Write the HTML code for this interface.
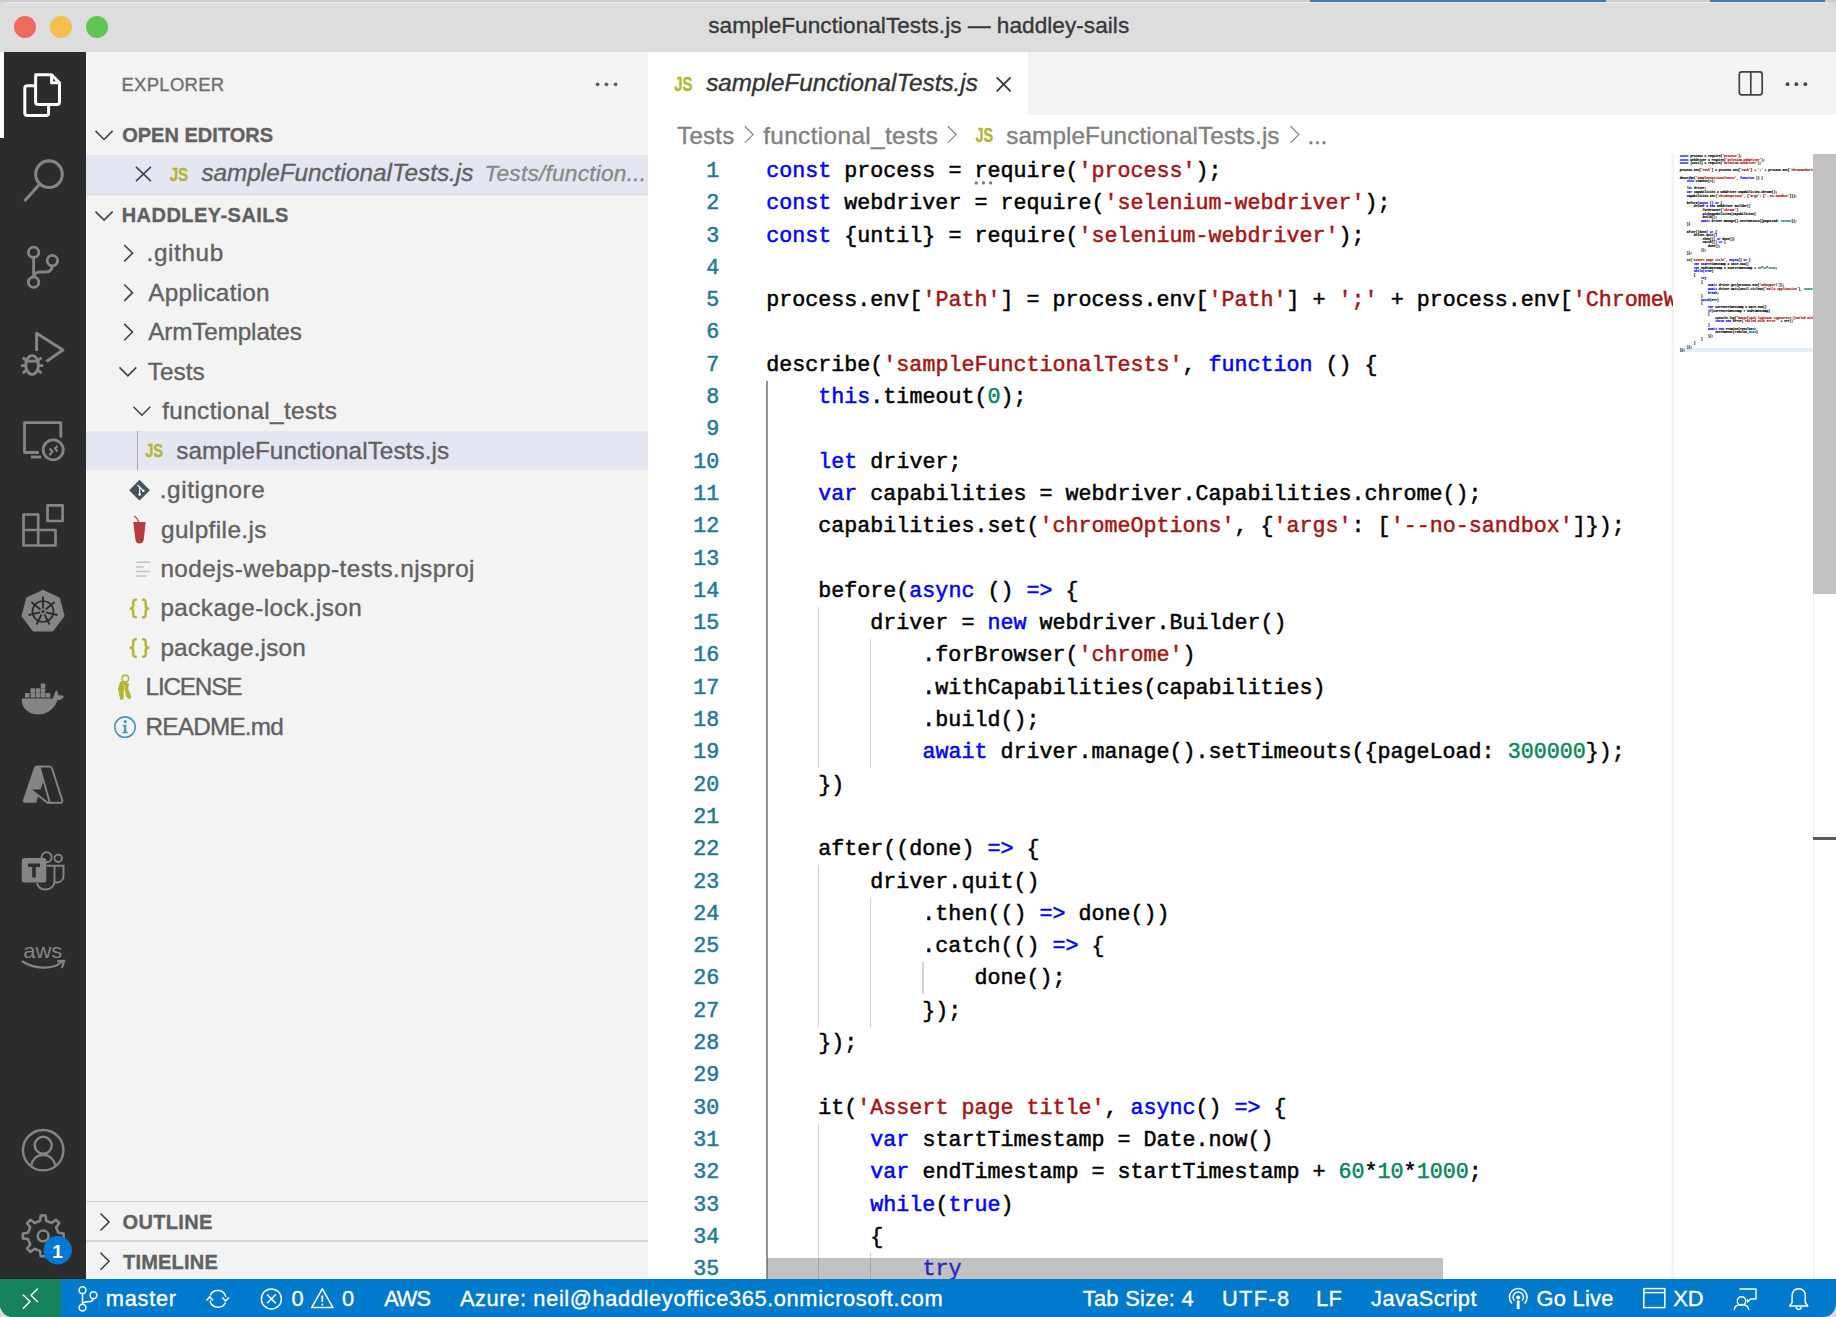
<!DOCTYPE html><html><head><meta charset="utf-8"><style>
*{margin:0;padding:0;box-sizing:border-box}
html,body{width:1836px;height:1317px;overflow:hidden;background:#d9d9d9;font-family:"Liberation Sans",sans-serif;position:relative}
.a{position:absolute}
.t{position:absolute;white-space:pre;line-height:1;-webkit-text-stroke:0.35px currentColor}
.cl{position:absolute;left:767px;-webkit-text-stroke:0.5px currentColor;font-family:"Liberation Mono",monospace;font-size:21.68px;white-space:pre;color:#000;line-height:32.3px;height:32.3px}
.ln{position:absolute;-webkit-text-stroke:0.5px currentColor;left:660px;width:59.3px;text-align:right;font-family:"Liberation Mono",monospace;font-size:21.68px;white-space:pre;color:#237893;line-height:32.3px}
.k{color:#0000ff}.s{color:#a31515}.n{color:#098658}
.g{position:absolute;width:1px;background:#d3d3d3}
svg{position:absolute;overflow:visible}
</style></head><body>
<div class="a" style="left:0;top:0;width:1836px;height:1317px;background:#d9d9d9"></div>
<div class="a" style="left:0;top:0;width:1836px;height:2px;background:#cfcccc"></div>
<div class="a" style="left:1310px;top:0;width:296px;height:2px;background:#3d78b0"></div>
<div class="a" style="left:1710px;top:0;width:115px;height:2px;background:#3d78b0"></div>
<div class="a" style="left:0;top:2px;width:1836px;height:50px;background:#dddddd;border-top-left-radius:12px;border-top-right-radius:12px;border-top:1px solid #ededed"></div>
<div class="a" style="left:14px;top:16px;width:22px;height:22px;border-radius:50%;background:#ec6a5e"></div>
<div class="a" style="left:50px;top:16px;width:22px;height:22px;border-radius:50%;background:#f4bf4f"></div>
<div class="a" style="left:86px;top:16px;width:22px;height:22px;border-radius:50%;background:#61c554"></div>
<div class="t" style="left:708.20px;top:14.87px;font-size:22.6px;color:#383838;font-weight:normal;font-style:normal;letter-spacing:0.041px;">sampleFunctionalTests.js — haddley-sails</div>
<div class="a" style="left:0;top:52px;width:86px;height:1227px;background:#2c2c2c"></div>
<div class="a" style="left:0;top:52px;width:3.6px;height:86px;background:#ffffff"></div>
<div class="a" style="left:86px;top:52px;width:562px;height:1227px;background:#f3f3f3"></div>
<div class="t" style="left:121.50px;top:75.84px;font-size:18.5px;color:#6f6f6f;font-weight:normal;font-style:normal;letter-spacing:0.271px;">EXPLORER</div>
<div class="t" style="left:122.20px;top:124.57px;font-size:20px;color:#616161;font-weight:bold;font-style:normal;letter-spacing:0.018px;">OPEN EDITORS</div>
<div class="a" style="left:86px;top:154.5px;width:562px;height:39.5px;background:#e4e6f1"></div>
<div class="a" style="left:86px;top:194px;width:562px;height:1px;background:#d9d9d9"></div>
<div class="t" style="left:201.40px;top:160.93px;font-size:24.3px;color:#616161;font-weight:normal;font-style:italic;letter-spacing:0.004px;">sampleFunctionalTests.js</div>
<div class="t" style="left:484.50px;top:162.28px;font-size:22.7px;color:#8a8a8a;font-weight:normal;font-style:italic;letter-spacing:0.213px;">Tests/function...</div>
<div class="t" style="left:121.70px;top:205.37px;font-size:20px;color:#616161;font-weight:bold;font-style:normal;letter-spacing:0.458px;">HADDLEY-SAILS</div>
<div class="t" style="left:146.60px;top:241.38px;font-size:24.3px;color:#616161;font-weight:normal;font-style:normal;letter-spacing:0.600px;">.github</div>
<div class="t" style="left:148.20px;top:280.83px;font-size:24.3px;color:#616161;font-weight:normal;font-style:normal;letter-spacing:0.250px;">Application</div>
<div class="t" style="left:148.20px;top:320.28px;font-size:24.3px;color:#616161;font-weight:normal;font-style:normal;letter-spacing:-0.145px;">ArmTemplates</div>
<div class="t" style="left:147.80px;top:359.73px;font-size:24.3px;color:#616161;font-weight:normal;font-style:normal;letter-spacing:0.050px;">Tests</div>
<div class="t" style="left:162.20px;top:399.18px;font-size:24.3px;color:#616161;font-weight:normal;font-style:normal;letter-spacing:0.387px;">functional_tests</div>
<div class="a" style="left:86px;top:430.75px;width:562px;height:39.45px;background:#e4e6f1"></div>
<div class="a" style="left:137px;top:430.75px;width:1.4px;height:39.45px;background:#a9a9a9"></div>
<div class="t" style="left:176.30px;top:438.63px;font-size:24.3px;color:#616161;font-weight:normal;font-style:normal;letter-spacing:0.057px;">sampleFunctionalTests.js</div>
<div class="t" style="left:159.80px;top:478.08px;font-size:24.3px;color:#616161;font-weight:normal;font-style:normal;letter-spacing:0.556px;">.gitignore</div>
<div class="t" style="left:161.00px;top:517.53px;font-size:24.3px;color:#616161;font-weight:normal;font-style:normal;letter-spacing:0.420px;">gulpfile.js</div>
<div class="t" style="left:160.40px;top:556.98px;font-size:24.3px;color:#616161;font-weight:normal;font-style:normal;letter-spacing:0.446px;">nodejs-webapp-tests.njsproj</div>
<div class="t" style="left:160.40px;top:596.43px;font-size:24.3px;color:#616161;font-weight:normal;font-style:normal;letter-spacing:0.425px;">package-lock.json</div>
<div class="t" style="left:160.40px;top:635.88px;font-size:24.3px;color:#616161;font-weight:normal;font-style:normal;letter-spacing:0.200px;">package.json</div>
<div class="t" style="left:145.60px;top:675.33px;font-size:24.3px;color:#616161;font-weight:normal;font-style:normal;letter-spacing:-1.200px;">LICENSE</div>
<div class="t" style="left:145.60px;top:714.78px;font-size:24.3px;color:#616161;font-weight:normal;font-style:normal;letter-spacing:-0.787px;">README.md</div>
<div class="a" style="left:86px;top:1200.5px;width:562px;height:1.5px;background:#d6d6d6"></div>
<div class="a" style="left:86px;top:1240px;width:562px;height:1.5px;background:#d6d6d6"></div>
<div class="t" style="left:122.50px;top:1212.07px;font-size:20px;color:#616161;font-weight:bold;font-style:normal;letter-spacing:0.333px;">OUTLINE</div>
<div class="t" style="left:123.10px;top:1251.77px;font-size:20px;color:#616161;font-weight:bold;font-style:normal;letter-spacing:0.186px;">TIMELINE</div>
<div class="a" style="left:648px;top:52px;width:1188px;height:1227px;background:#ffffff"></div>
<div class="a" style="left:648px;top:52px;width:1188px;height:63px;background:#f3f3f3"></div>
<div class="a" style="left:648px;top:52px;width:380px;height:63px;background:#ffffff"></div>
<div class="t" style="left:706.20px;top:70.71px;font-size:24.2px;color:#333333;font-weight:normal;font-style:italic;letter-spacing:0.043px;">sampleFunctionalTests.js</div>
<div class="t" style="left:677.20px;top:123.97px;font-size:23.9px;color:#808080;font-weight:normal;font-style:normal;letter-spacing:0.300px;">Tests</div>
<div class="t" style="left:763.20px;top:123.63px;font-size:24.3px;color:#808080;font-weight:normal;font-style:normal;letter-spacing:0.387px;">functional_tests</div>
<div class="t" style="left:1006.30px;top:123.63px;font-size:24.3px;color:#808080;font-weight:normal;font-style:normal;letter-spacing:0.078px;">sampleFunctionalTests.js</div>
<div class="t" style="left:1307.40px;top:123.63px;font-size:24.3px;color:#808080;font-weight:normal;font-style:normal;letter-spacing:-0.200px;">...</div>
<div class="a" style="left:766.10px;top:380.60px;width:2px;height:904.40px;background:#939393"></div>
<div class="a" style="left:818.14px;top:606.70px;width:1.3px;height:161.50px;background:#d3d3d3"></div>
<div class="a" style="left:870.18px;top:639.00px;width:1.3px;height:129.20px;background:#d3d3d3"></div>
<div class="a" style="left:818.14px;top:865.10px;width:1.3px;height:161.50px;background:#d3d3d3"></div>
<div class="a" style="left:870.18px;top:897.40px;width:1.3px;height:129.20px;background:#d3d3d3"></div>
<div class="a" style="left:922.22px;top:962.00px;width:1.3px;height:32.30px;background:#d3d3d3"></div>
<div class="a" style="left:818.14px;top:1123.50px;width:1.3px;height:161.50px;background:#d3d3d3"></div>
<div class="a" style="left:870.18px;top:1252.70px;width:1.3px;height:32.30px;background:#d3d3d3"></div>
<div class="a" style="left:648px;top:154.5px;width:1025px;height:1125px;overflow:hidden">
<div class="ln" style="top:1.40px;left:12px">1</div>
<div class="cl" style="top:1.40px;left:118.3px"><span class="k">const</span> process = require(<span class="s">&#x27;process&#x27;</span>);</div>
<div class="ln" style="top:33.70px;left:12px">2</div>
<div class="cl" style="top:33.70px;left:118.3px"><span class="k">const</span> webdriver = require(<span class="s">&#x27;selenium-webdriver&#x27;</span>);</div>
<div class="ln" style="top:66.00px;left:12px">3</div>
<div class="cl" style="top:66.00px;left:118.3px"><span class="k">const</span> {until} = require(<span class="s">&#x27;selenium-webdriver&#x27;</span>);</div>
<div class="ln" style="top:98.30px;left:12px">4</div>
<div class="cl" style="top:98.30px;left:118.3px"></div>
<div class="ln" style="top:130.60px;left:12px">5</div>
<div class="cl" style="top:130.60px;left:118.3px">process.env[<span class="s">&#x27;Path&#x27;</span>] = process.env[<span class="s">&#x27;Path&#x27;</span>] + <span class="s">&#x27;;&#x27;</span> + process.env[<span class="s">&#x27;ChromeWebDriver&#x27;</span>];</div>
<div class="ln" style="top:162.90px;left:12px">6</div>
<div class="cl" style="top:162.90px;left:118.3px"></div>
<div class="ln" style="top:195.20px;left:12px">7</div>
<div class="cl" style="top:195.20px;left:118.3px">describe(<span class="s">&#x27;sampleFunctionalTests&#x27;</span>, <span class="k">function</span> () {</div>
<div class="ln" style="top:227.50px;left:12px">8</div>
<div class="cl" style="top:227.50px;left:118.3px">    <span class="k">this</span>.timeout(<span class="n">0</span>);</div>
<div class="ln" style="top:259.80px;left:12px">9</div>
<div class="cl" style="top:259.80px;left:118.3px"></div>
<div class="ln" style="top:292.10px;left:12px">10</div>
<div class="cl" style="top:292.10px;left:118.3px">    <span class="k">let</span> driver;</div>
<div class="ln" style="top:324.40px;left:12px">11</div>
<div class="cl" style="top:324.40px;left:118.3px">    <span class="k">var</span> capabilities = webdriver.Capabilities.chrome();</div>
<div class="ln" style="top:356.70px;left:12px">12</div>
<div class="cl" style="top:356.70px;left:118.3px">    capabilities.set(<span class="s">&#x27;chromeOptions&#x27;</span>, {<span class="s">&#x27;args&#x27;</span>: [<span class="s">&#x27;--no-sandbox&#x27;</span>]});</div>
<div class="ln" style="top:389.00px;left:12px">13</div>
<div class="cl" style="top:389.00px;left:118.3px"></div>
<div class="ln" style="top:421.30px;left:12px">14</div>
<div class="cl" style="top:421.30px;left:118.3px">    before(<span class="k">async</span> () <span class="k">=&gt;</span> {</div>
<div class="ln" style="top:453.60px;left:12px">15</div>
<div class="cl" style="top:453.60px;left:118.3px">        driver = <span class="k">new</span> webdriver.Builder()</div>
<div class="ln" style="top:485.90px;left:12px">16</div>
<div class="cl" style="top:485.90px;left:118.3px">            .forBrowser(<span class="s">&#x27;chrome&#x27;</span>)</div>
<div class="ln" style="top:518.20px;left:12px">17</div>
<div class="cl" style="top:518.20px;left:118.3px">            .withCapabilities(capabilities)</div>
<div class="ln" style="top:550.50px;left:12px">18</div>
<div class="cl" style="top:550.50px;left:118.3px">            .build();</div>
<div class="ln" style="top:582.80px;left:12px">19</div>
<div class="cl" style="top:582.80px;left:118.3px">            <span class="k">await</span> driver.manage().setTimeouts({pageLoad: <span class="n">300000</span>});</div>
<div class="ln" style="top:615.10px;left:12px">20</div>
<div class="cl" style="top:615.10px;left:118.3px">    })</div>
<div class="ln" style="top:647.40px;left:12px">21</div>
<div class="cl" style="top:647.40px;left:118.3px"></div>
<div class="ln" style="top:679.70px;left:12px">22</div>
<div class="cl" style="top:679.70px;left:118.3px">    after((done) <span class="k">=&gt;</span> {</div>
<div class="ln" style="top:712.00px;left:12px">23</div>
<div class="cl" style="top:712.00px;left:118.3px">        driver.quit()</div>
<div class="ln" style="top:744.30px;left:12px">24</div>
<div class="cl" style="top:744.30px;left:118.3px">            .then(() <span class="k">=&gt;</span> done())</div>
<div class="ln" style="top:776.60px;left:12px">25</div>
<div class="cl" style="top:776.60px;left:118.3px">            .catch(() <span class="k">=&gt;</span> {</div>
<div class="ln" style="top:808.90px;left:12px">26</div>
<div class="cl" style="top:808.90px;left:118.3px">                done();</div>
<div class="ln" style="top:841.20px;left:12px">27</div>
<div class="cl" style="top:841.20px;left:118.3px">            });</div>
<div class="ln" style="top:873.50px;left:12px">28</div>
<div class="cl" style="top:873.50px;left:118.3px">    });</div>
<div class="ln" style="top:905.80px;left:12px">29</div>
<div class="cl" style="top:905.80px;left:118.3px"></div>
<div class="ln" style="top:938.10px;left:12px">30</div>
<div class="cl" style="top:938.10px;left:118.3px">    it(<span class="s">&#x27;Assert page title&#x27;</span>, <span class="k">async</span>() <span class="k">=&gt;</span> {</div>
<div class="ln" style="top:970.40px;left:12px">31</div>
<div class="cl" style="top:970.40px;left:118.3px">        <span class="k">var</span> startTimestamp = Date.now()</div>
<div class="ln" style="top:1002.70px;left:12px">32</div>
<div class="cl" style="top:1002.70px;left:118.3px">        <span class="k">var</span> endTimestamp = startTimestamp + <span class="n">60</span>*<span class="n">10</span>*<span class="n">1000</span>;</div>
<div class="ln" style="top:1035.00px;left:12px">33</div>
<div class="cl" style="top:1035.00px;left:118.3px">        <span class="k">while</span>(<span class="k">true</span>)</div>
<div class="ln" style="top:1067.30px;left:12px">34</div>
<div class="cl" style="top:1067.30px;left:118.3px">        {</div>
<div class="ln" style="top:1099.60px;left:12px">35</div>
<div class="cl" style="top:1099.60px;left:118.3px">            <span class="k">try</span></div>
<div class="ln" style="top:1131.90px;left:12px">36</div>
<div class="cl" style="top:1131.90px;left:118.3px">            {</div>
</div>
<div class="a" style="left:1669px;top:154px;width:5px;height:1125px;background:linear-gradient(to right,rgba(0,0,0,0),rgba(0,0,0,0.06))"></div>
<div class="a" style="left:1673px;top:154px;width:140px;height:1125px;overflow:hidden">
<div class="a" style="left:6.7px;top:194.08px;width:140px;height:3.59px;background:#e4eef8"></div>
<div class="a" style="left:6.70px;top:0;-webkit-text-stroke:0.15px;font-family:'Liberation Mono',monospace;font-size:2.967px;line-height:3.594px;white-space:pre;color:#000;font-weight:bold">
<div class="a" style="left:0;top:1.100px"><span class="k">const</span> process = require(<span class="s">&#x27;process&#x27;</span>);</div>
<div class="a" style="left:0;top:4.694px"><span class="k">const</span> webdriver = require(<span class="s">&#x27;selenium-webdriver&#x27;</span>);</div>
<div class="a" style="left:0;top:8.288px"><span class="k">const</span> {until} = require(<span class="s">&#x27;selenium-webdriver&#x27;</span>);</div>
<div class="a" style="left:0;top:11.882px"></div>
<div class="a" style="left:0;top:15.476px">process.env[<span class="s">&#x27;Path&#x27;</span>] = process.env[<span class="s">&#x27;Path&#x27;</span>] + <span class="s">&#x27;;&#x27;</span> + process.env[<span class="s">&#x27;ChromeWebDriver&#x27;</span>];</div>
<div class="a" style="left:0;top:19.070px"></div>
<div class="a" style="left:0;top:22.664px">describe(<span class="s">&#x27;sampleFunctionalTests&#x27;</span>, <span class="k">function</span> () {</div>
<div class="a" style="left:0;top:26.258px">    <span class="k">this</span>.timeout(<span class="n">0</span>);</div>
<div class="a" style="left:0;top:29.852px"></div>
<div class="a" style="left:0;top:33.446px">    <span class="k">let</span> driver;</div>
<div class="a" style="left:0;top:37.040px">    <span class="k">var</span> capabilities = webdriver.Capabilities.chrome();</div>
<div class="a" style="left:0;top:40.634px">    capabilities.set(<span class="s">&#x27;chromeOptions&#x27;</span>, {<span class="s">&#x27;args&#x27;</span>: [<span class="s">&#x27;--no-sandbox&#x27;</span>]});</div>
<div class="a" style="left:0;top:44.228px"></div>
<div class="a" style="left:0;top:47.822px">    before(<span class="k">async</span> () <span class="k">=&gt;</span> {</div>
<div class="a" style="left:0;top:51.416px">        driver = <span class="k">new</span> webdriver.Builder()</div>
<div class="a" style="left:0;top:55.010px">            .forBrowser(<span class="s">&#x27;chrome&#x27;</span>)</div>
<div class="a" style="left:0;top:58.604px">            .withCapabilities(capabilities)</div>
<div class="a" style="left:0;top:62.198px">            .build();</div>
<div class="a" style="left:0;top:65.792px">            <span class="k">await</span> driver.manage().setTimeouts({pageLoad: <span class="n">300000</span>});</div>
<div class="a" style="left:0;top:69.386px">    })</div>
<div class="a" style="left:0;top:72.980px"></div>
<div class="a" style="left:0;top:76.574px">    after((done) <span class="k">=&gt;</span> {</div>
<div class="a" style="left:0;top:80.168px">        driver.quit()</div>
<div class="a" style="left:0;top:83.762px">            .then(() <span class="k">=&gt;</span> done())</div>
<div class="a" style="left:0;top:87.356px">            .catch(() <span class="k">=&gt;</span> {</div>
<div class="a" style="left:0;top:90.950px">                done();</div>
<div class="a" style="left:0;top:94.544px">            });</div>
<div class="a" style="left:0;top:98.138px">    });</div>
<div class="a" style="left:0;top:101.732px"></div>
<div class="a" style="left:0;top:105.326px">    it(<span class="s">&#x27;Assert page title&#x27;</span>, <span class="k">async</span>() <span class="k">=&gt;</span> {</div>
<div class="a" style="left:0;top:108.920px">        <span class="k">var</span> startTimestamp = Date.now()</div>
<div class="a" style="left:0;top:112.514px">        <span class="k">var</span> endTimestamp = startTimestamp + <span class="n">60</span>*<span class="n">10</span>*<span class="n">1000</span>;</div>
<div class="a" style="left:0;top:116.108px">        <span class="k">while</span>(<span class="k">true</span>)</div>
<div class="a" style="left:0;top:119.702px">        {</div>
<div class="a" style="left:0;top:123.296px">            <span class="k">try</span></div>
<div class="a" style="left:0;top:126.890px">            {</div>
<div class="a" style="left:0;top:130.484px">                <span class="k">await</span> driver.get(process.env[<span class="s">&#x27;webAppUrl&#x27;</span>]);</div>
<div class="a" style="left:0;top:134.078px">                <span class="k">await</span> driver.wait(until.titleIs(<span class="s">&#x27;Sails Application&#x27;</span>), <span class="n">20000</span>);</div>
<div class="a" style="left:0;top:137.672px">                <span class="k">break</span>;</div>
<div class="a" style="left:0;top:141.266px">            }</div>
<div class="a" style="left:0;top:144.860px">            <span class="k">catch</span>(err)</div>
<div class="a" style="left:0;top:148.454px">            {</div>
<div class="a" style="left:0;top:152.048px">                <span class="k">var</span> currentTimestamp = Date.now()</div>
<div class="a" style="left:0;top:155.642px">                <span class="k">if</span>(currentTimestamp &gt; endTimestamp)</div>
<div class="a" style="left:0;top:159.236px">                {</div>
<div class="a" style="left:0;top:162.830px">                    console.log(<span class="s">&quot;##vso[task.logissue type=error;]Failed with error &quot;</span> + err);</div>
<div class="a" style="left:0;top:166.424px">                    <span class="k">throw</span> <span class="k">new</span> Error(<span class="s">&#x27;Failed with error &#x27;</span> + err);</div>
<div class="a" style="left:0;top:170.018px">                }</div>
<div class="a" style="left:0;top:173.612px">                <span class="k">await</span> <span class="k">new</span> Promise(resolve<span class="k">=&gt;</span></div>
<div class="a" style="left:0;top:177.206px">                    setTimeout(resolve,<span class="n">5000</span>)</div>
<div class="a" style="left:0;top:180.800px">                });</div>
<div class="a" style="left:0;top:184.394px">            }</div>
<div class="a" style="left:0;top:187.988px">        }</div>
<div class="a" style="left:0;top:191.582px">    });</div>
<div class="a" style="left:0;top:195.176px">});</div>
</div></div>
<div class="a" style="left:1813px;top:154px;width:1px;height:1125px;background:#ececec"></div>
<div class="a" style="left:1813px;top:154px;width:23px;height:440px;background:#c1c1c1"></div>
<div class="a" style="left:1813px;top:836.5px;width:23px;height:3px;background:#5a5a5a"></div>
<div class="a" style="left:767px;top:1258px;width:676px;height:21px;background:rgba(100,100,100,0.4)"></div>
<div class="a" style="left:0;top:1279px;width:1836px;height:38px;background:#007acc;border-bottom-left-radius:13px;border-bottom-right-radius:13px;overflow:hidden"><div class="a" style="left:0;top:0;width:61px;height:38px;background:#16825d"></div></div>
<div class="t" style="left:105.80px;top:1288.45px;font-size:21.8px;color:#ffffff;font-weight:normal;font-style:normal;letter-spacing:0.720px;">master</div>
<div class="t" style="left:291.50px;top:1288.45px;font-size:21.8px;color:#ffffff;font-weight:normal;font-style:normal;">0</div>
<div class="t" style="left:342.00px;top:1288.45px;font-size:21.8px;color:#ffffff;font-weight:normal;font-style:normal;">0</div>
<div class="t" style="left:384.20px;top:1288.45px;font-size:21.8px;color:#ffffff;font-weight:normal;font-style:normal;letter-spacing:-1.050px;">AWS</div>
<div class="t" style="left:459.90px;top:1288.45px;font-size:21.8px;color:#ffffff;font-weight:normal;font-style:normal;letter-spacing:0.633px;">Azure: neil@haddleyoffice365.onmicrosoft.com</div>
<div class="t" style="left:1082.70px;top:1288.45px;font-size:21.8px;color:#ffffff;font-weight:normal;font-style:normal;letter-spacing:0.320px;">Tab Size: 4</div>
<div class="t" style="left:1221.90px;top:1288.45px;font-size:21.8px;color:#ffffff;font-weight:normal;font-style:normal;letter-spacing:1.375px;">UTF-8</div>
<div class="t" style="left:1316.00px;top:1288.45px;font-size:21.8px;color:#ffffff;font-weight:normal;font-style:normal;letter-spacing:0.400px;">LF</div>
<div class="t" style="left:1371.10px;top:1288.45px;font-size:21.8px;color:#ffffff;font-weight:normal;font-style:normal;letter-spacing:0.400px;">JavaScript</div>
<div class="t" style="left:1536.50px;top:1288.45px;font-size:21.8px;color:#ffffff;font-weight:normal;font-style:normal;letter-spacing:0.283px;">Go Live</div>
<div class="t" style="left:1673.20px;top:1288.45px;font-size:21.8px;color:#ffffff;font-weight:normal;font-style:normal;letter-spacing:0.000px;">XD</div>
<svg class="a" style="left:0;top:0" width="1836" height="1317" viewBox="0 0 1836 1317"><g fill="none" stroke="#ffffff" stroke-width="3" stroke-linejoin="round"><path d="M35.6,74.8 H51.6 L59.5,82.7 V101.9 Q59.5,104.4 57,104.4 H38.1 Q35.6,104.4 35.6,101.9 V77.3 Q35.6,74.8 38.1,74.8 Z"/><path d="M51.6,74.8 V82.7 H59.5"/><path d="M35.6,85.8 H27.3 Q24.8,85.8 24.8,88.3 V112.9 Q24.8,115.4 27.3,115.4 H46.1 Q48.6,115.4 48.6,112.9 V104.4"/></g><g fill="none" stroke="#858585" stroke-width="3.1"><circle cx="49" cy="174.2" r="13.3"/><path d="M39.6,184.3 L24.5,201"/></g><g fill="none" stroke="#858585" stroke-width="2.8"><circle cx="33.6" cy="252.3" r="5.2"/><circle cx="52.4" cy="260.6" r="5.2"/><circle cx="33.6" cy="282.2" r="5.2"/><path d="M33.6,257.5 V277"/><path d="M52.4,265.8 C52,271 49,272 45,272 H40 C36,272 34,274 33.6,277.5"/></g><g fill="none" stroke="#858585" stroke-width="2.9" stroke-linejoin="round"><path d="M36.6,351 V333.2 L63,350 L46.3,361.5"/><ellipse cx="32.1" cy="365" rx="6.3" ry="9.4"/><path d="M26,361.2 H38.2"/><path d="M22.8,357.5 L27,361.5 M41.4,357.5 L37.2,361.5 M21,365.6 H25.8 M38.4,365.6 H43.2 M22.8,373.3 L27,369.3 M41.4,373.3 L37.2,369.3"/></g><g fill="none" stroke="#858585" stroke-width="2.8" stroke-linejoin="round"><path d="M38.8,452.5 H24.5 V422.7 H60.8 V437.5"/><path d="M31,457 H41.2"/><circle cx="53.2" cy="449.8" r="10"/><path d="M49.5,448.5 L52.5,451.5 L49.5,455 M57.5,446 L55,448.5 L57.5,451.5" stroke-width="2.2"/></g><g fill="none" stroke="#858585" stroke-width="2.7" stroke-linejoin="round"><path d="M23.5,514.5 H38.2 V545.5 H23.5 Z M23.5,530 H55.5 V545.5 H38.2"/><rect x="47.5" y="505.4" width="15.1" height="15.6"/></g><path fill="#858585" d="M43,590.8 L59,598.5 L63.5,616 L52.5,630.5 H33.5 L22.5,616 L27,598.5 Z" stroke="#858585" stroke-width="2" stroke-linejoin="round"/><g fill="none" stroke="#2c2c2c" stroke-width="1.7"><circle cx="43" cy="611.5" r="10.5"/><path d="M43,596.5 V608.5 M31.3,602 L40.5,609.5 M54.7,602 L45.5,609.5 M28.5,615 L40,612.3 M57.5,615 L46,612.3 M36.5,624.5 L41.5,614.5 M49.5,624.5 L44.5,614.5" stroke-width="1.9"/></g><circle cx="43" cy="611.5" r="1.6" fill="#2c2c2c"/><g fill="#858585"><path d="M21.6,698.6 H53 C54,694 56,690.5 56.5,690.5 C58,692 58.5,694 58,695.5 C60,695 62,695.5 64,696.5 C62.5,699.5 60,700 57.6,700 C54,710 46,714.5 38,714.5 C28,714.5 21.6,708 21.6,698.6 Z"/><rect x="25" y="693" width="4.5" height="4.6"/><rect x="30.6" y="693" width="4.5" height="4.6"/><rect x="35.8" y="693" width="4.5" height="4.6"/><rect x="40.8" y="693" width="4.5" height="4.6"/><rect x="45.8" y="693" width="4.5" height="4.6"/><rect x="30.6" y="688.3" width="4.5" height="4.5"/><rect x="35.8" y="688.3" width="4.5" height="4.5"/><rect x="40.8" y="688.3" width="4.5" height="4.5"/><rect x="40.8" y="683.5" width="4.5" height="4.5"/></g><path fill="#858585" d="M37.5,765.5 H39.8 L43.8,779.8 L40.5,789.5 L32,789.5 L38.5,795.3 L36.2,802.7 H25 C23.5,802.7 22.5,801.5 23,800 L34,767.8 C34.5,766.3 35.8,765.5 37.5,765.5 Z"/><path fill="none" stroke="#858585" stroke-width="1.9" stroke-linejoin="round" d="M39.5,766.5 H49.5 C50.8,766.5 51.6,767.3 52,768.5 L62.2,800 C62.7,801.5 61.8,802.7 60.3,802.7 H47.5 L32,790.5 M39.5,766.5 L49.5,801.8"/><g fill="none" stroke="#858585" stroke-width="1.9"><circle cx="46.6" cy="857.2" r="5"/><circle cx="58.2" cy="858.3" r="3.7"/><path d="M46.5,865.8 H63.5 V875.5 C63.5,880 60.5,882.5 57,882.5 C55.5,882.5 55,882 54.5,881.5"/><path d="M54.5,866 V881 C54.5,886 50.5,889.5 46,889.5 C41,889.5 37.8,887 37,883"/></g><rect x="21.8" y="858" width="24.5" height="24.5" rx="2.5" fill="#858585"/><path d="M28,863.5 H40 V867 H35.8 V877.5 H32.2 V867 H28 Z" fill="#2c2c2c"/><text x="42.8" y="957.5" text-anchor="middle" font-family="Liberation Sans" font-size="21" fill="#858585" textLength="39" lengthAdjust="spacingAndGlyphs">aws</text><path fill="none" stroke="#858585" stroke-width="2.2" stroke-linecap="round" d="M22.5,961.5 C34,969 52,970 61,962.5"/><path fill="none" stroke="#858585" stroke-width="2" d="M57,961.3 L64.2,960.9 L62,968"/><g fill="none" stroke="#858585" stroke-width="2.4"><circle cx="43.2" cy="1150.2" r="20.2"/><circle cx="43.2" cy="1145.3" r="8.5"/><path d="M31.2,1165.5 C32.5,1159 37,1155 43.2,1155 C49.4,1155 54,1159 55.2,1165.5"/></g><g fill="none" stroke="#858585" stroke-width="2.6" stroke-linejoin="round"><path d="M58.39,1232.82 L63.55,1233.45 L63.55,1238.35 L58.39,1238.98 L56.12,1244.46 L59.33,1248.56 L55.86,1252.03 L51.76,1248.82 L46.28,1251.09 L45.65,1256.25 L40.75,1256.25 L40.12,1251.09 L34.64,1248.82 L30.54,1252.03 L27.07,1248.56 L30.28,1244.46 L28.01,1238.98 L22.85,1238.35 L22.85,1233.45 L28.01,1232.82 L30.28,1227.34 L27.07,1223.24 L30.54,1219.77 L34.64,1222.98 L40.12,1220.71 L40.75,1215.55 L45.65,1215.55 L46.28,1220.71 L51.76,1222.98 L55.86,1219.77 L59.33,1223.24 L56.12,1227.34 Z"/><circle cx="43.2" cy="1235.9" r="5.4"/></g><circle cx="57.7" cy="1250.2" r="14.2" fill="#0078d4"/><text x="57.5" y="1257.8" text-anchor="middle" font-family="Liberation Sans" font-weight="bold" font-size="19" fill="#fff">1</text><path fill="none" stroke="#424242" stroke-width="1.6" d="M95.5,130.9 L104.05,139.45 L112.6,130.9"/><path fill="none" stroke="#424242" stroke-width="1.6" d="M95.5,211.6 L104.05,220.14999999999998 L112.6,211.6"/><circle cx="597.6" cy="84.3" r="1.9" fill="#616161"/><circle cx="606.5" cy="84.3" r="1.9" fill="#616161"/><circle cx="615.6" cy="84.3" r="1.9" fill="#616161"/><path fill="none" stroke="#424242" stroke-width="1.6" d="M136,166.9 L150.9,181.2 M150.9,166.9 L136,181.2"/><text x="169.7" y="180.9" font-family="Liberation Sans" font-weight="bold" font-size="19.04" fill="#b5b535" stroke="#b5b535" stroke-width="0.35" textLength="18.5" lengthAdjust="spacingAndGlyphs">JS</text><path fill="none" stroke="#424242" stroke-width="1.6" d="M124.3,245.0 L132.5,253.2 L124.3,261.4"/><path fill="none" stroke="#424242" stroke-width="1.6" d="M124.3,284.45 L132.5,292.65 L124.3,300.84999999999997"/><path fill="none" stroke="#424242" stroke-width="1.6" d="M124.3,323.9 L132.5,332.09999999999997 L124.3,340.29999999999995"/><path fill="none" stroke="#424242" stroke-width="1.6" d="M119.5,367.35 L127.9,375.75 L136.3,367.35"/><path fill="none" stroke="#424242" stroke-width="1.6" d="M133.5,406.8 L141.9,415.20000000000005 L150.3,406.8"/><text x="145.2" y="457.15" font-family="Liberation Sans" font-weight="bold" font-size="19.04" fill="#b5b535" stroke="#b5b535" stroke-width="0.35" textLength="18.0" lengthAdjust="spacingAndGlyphs">JS</text><path fill="#41535b" d="M139.5,480.3 L149.4,490.2 L139.5,500.1 L129.6,490.2 Z" stroke="#41535b" stroke-width="1" stroke-linejoin="round"/><path fill="none" stroke="#fff" stroke-width="1.2" d="M137.5,485 L139.7,487.2 V494.5 M139.7,487.2 L143.3,490.8"/><circle cx="139.7" cy="494.5" r="1.3" fill="#fff"/><circle cx="143.3" cy="490.8" r="1.3" fill="#fff"/><path fill="#b83b3e" d="M133.3,522 H145.6 L144,537.5 C143.8,541 143,543.4 139.5,543.4 C136,543.4 135.5,541 135.2,537.5 Z"/><path fill="none" stroke="#b83b3e" stroke-width="1.2" d="M134.2,516 C136.5,517.5 138,519.5 138.7,522"/><g stroke="#c5c5c5" stroke-width="1.5"><path d="M136,562.3 H150.1 M136,566.9 H143.5 M136,571.5 H150.1 M136,576 H146.5"/></g><g fill="none" stroke="#b5b535" stroke-width="2.5" stroke-linecap="round" stroke-linejoin="round"><path d="M135.8,599.8 C134,599.8 133.2,600.8 133.2,602.5 V605.5 C133.2,607 132.3,608.4 130.6,608.4 C132.3,608.4 133.2,609.8 133.2,611.3 V614.5 C133.2,616.3 134,617.3 135.8,617.3"/><path d="M143.1,599.8 C144.9,599.8 145.7,600.8 145.7,602.5 V605.5 C145.7,607 146.6,608.4 148.3,608.4 C146.6,608.4 145.7,609.8 145.7,611.3 V614.5 C145.7,616.3 144.9,617.3 143.1,617.3"/></g><g fill="none" stroke="#b5b535" stroke-width="2.5" stroke-linecap="round" stroke-linejoin="round"><path d="M135.8,639.25 C134,639.25 133.2,640.25 133.2,641.95 V644.95 C133.2,646.45 132.3,647.85 130.6,647.85 C132.3,647.85 133.2,649.25 133.2,650.75 V653.95 C133.2,655.75 134,656.75 135.8,656.75"/><path d="M143.1,639.25 C144.9,639.25 145.7,640.25 145.7,641.95 V644.95 C145.7,646.45 146.6,647.85 148.3,647.85 C146.6,647.85 145.7,649.25 145.7,650.75 V653.95 C145.7,655.75 144.9,656.75 143.1,656.75"/></g><g fill="#b5b535"><circle cx="125.3" cy="678.5" r="3.3" fill="none" stroke="#b5b535" stroke-width="1.5"/><path d="M120,682 C121.5,680.5 124.5,680.5 125.5,682.5 L124,686 L123.5,699.5 L120.5,700 L119.5,696 L118,689 Z"/><path d="M124.5,683 C126.5,681.5 129,682.5 129,685 L128,688 L131.5,697 L129.5,699.5 L126.5,697 L124.5,690 Z"/></g><circle cx="125" cy="727.1" r="10.2" fill="none" stroke="#4a95b5" stroke-width="1.6"/><circle cx="125.2" cy="721.5" r="1.6" fill="#4a95b5"/><path d="M122.8,724.8 H126.3 V731.8 H127.8 V733.2 H122.5 V731.8 H124 V726.2 H122.8 Z" fill="#4a95b5"/><path fill="none" stroke="#424242" stroke-width="1.6" d="M100.5,1213.5 L109.0,1222.0 L100.5,1230.5"/><path fill="none" stroke="#424242" stroke-width="1.6" d="M100.5,1252.8 L109.0,1261.3 L100.5,1269.8"/><text x="674.3" y="91.2" font-family="Liberation Sans" font-weight="bold" font-size="19.48" fill="#b5b535" stroke="#b5b535" stroke-width="0.35" textLength="18.300000000000068" lengthAdjust="spacingAndGlyphs">JS</text><path fill="none" stroke="#333" stroke-width="1.7" d="M996.7,77.3 L1010.6,91.3 M1010.6,77.3 L996.7,91.3"/><rect x="1739.3" y="71.9" width="22.9" height="22.9" rx="2.5" fill="none" stroke="#424242" stroke-width="1.7"/><path d="M1750.8,71.9 V94.8" stroke="#424242" stroke-width="1.7"/><circle cx="1787.5" cy="84.2" r="1.9" fill="#424242"/><circle cx="1796.4" cy="84.2" r="1.9" fill="#424242"/><circle cx="1805.4" cy="84.2" r="1.9" fill="#424242"/><path fill="none" stroke="#888" stroke-width="1.3" d="M744.8,126.3 L753.0999999999999,134.6 L744.8,142.9"/><path fill="none" stroke="#888" stroke-width="1.3" d="M947.8,126.3 L956.0999999999999,134.6 L947.8,142.9"/><path fill="none" stroke="#888" stroke-width="1.3" d="M1290.5,126.3 L1298.8,134.6 L1290.5,142.9"/><text x="975.5" y="141.5" font-family="Liberation Sans" font-weight="bold" font-size="19.33" fill="#b5b535" stroke="#b5b535" stroke-width="0.35" textLength="17.700000000000045" lengthAdjust="spacingAndGlyphs">JS</text><circle cx="976.2" cy="182.9" r="1.6" fill="#777777"/><circle cx="983.4" cy="182.9" r="1.6" fill="#777777"/><circle cx="990.6" cy="182.9" r="1.6" fill="#777777"/><g fill="none" stroke="#ffffff" stroke-width="1.4"><path d="M22.9,1294.7 L30.1,1301.5 L22.9,1308.7 M37.9,1288.5 L31,1295.3 L37.9,1301.9"/></g><g fill="none" stroke="#ffffff" stroke-width="1.5"><circle cx="82.5" cy="1290.2" r="3.4"/><circle cx="93.5" cy="1295.2" r="3.4"/><circle cx="82.5" cy="1307.6" r="3.4"/><path d="M82.5,1293.6 V1304.2 M93.3,1298.6 C93,1301 91,1301.6 88,1301.8 C85,1302 83,1302.5 82.5,1304"/></g><g fill="none" stroke="#ffffff" stroke-width="1.5"><path d="M210,1300.5 A8.2,8.2 0 0 0 225.5,1302.5"/><path d="M225.8,1297.2 A8.2,8.2 0 0 0 210.2,1295.5"/><path d="M206.5,1300.5 L209.8,1296.8 L213,1300.5" stroke-linejoin="round"/><path d="M222.3,1297.5 L225.6,1301 L229,1297.5"/></g><g fill="none" stroke="#ffffff" stroke-width="1.5"><circle cx="271.4" cy="1298.9" r="10"/><path d="M267,1294.5 L275.8,1303.3 M275.8,1294.5 L267,1303.3"/></g><g fill="none" stroke="#ffffff" stroke-width="1.5" stroke-linejoin="round"><path d="M322.3,1288.8 L333,1307.6 H311.6 Z"/><path d="M322.3,1295.5 V1302" stroke-width="1.8"/></g><circle cx="322.3" cy="1304.5" r="1" fill="#fff"/><g fill="none" stroke="#ffffff" stroke-width="1.5"><path d="M1512,1303.5 A8.8,8.8 0 1 1 1524.5,1303.5"/><path d="M1514.5,1300.8 A5.2,5.2 0 1 1 1522,1300.8"/></g><circle cx="1518.2" cy="1297.5" r="2" fill="#fff"/><path d="M1516.8,1300.5 H1519.6 V1309 H1516.8 Z" fill="#fff"/><g fill="none" stroke="#ffffff" stroke-width="1.5"><rect x="1643.8" y="1288.6" width="21" height="19"/><path d="M1643.8,1292.6 H1664.8"/></g><g fill="none" stroke="#ffffff" stroke-width="1.4" stroke-linejoin="round"><path d="M1739.5,1289 H1756 V1299 H1750.5 L1747.5,1302 V1299"/><circle cx="1741.5" cy="1301" r="4.2" fill="#007acc"/><path d="M1734.2,1310 C1734.5,1306 1737.5,1304.5 1741.5,1304.5 C1745.5,1304.5 1748.5,1306 1748.8,1310"/></g><g fill="none" stroke="#ffffff" stroke-width="1.5" stroke-linejoin="round"><path d="M1798.7,1288.7 C1803,1288.7 1805.3,1292 1805.3,1296 V1302.5 L1807.8,1306 H1789.6 L1792.1,1302.5 V1296 C1792.1,1292 1794.4,1288.7 1798.7,1288.7 Z"/><path d="M1796.3,1307 A2.4,2.4 0 0 0 1801.1,1307"/></g></svg>
</body></html>
